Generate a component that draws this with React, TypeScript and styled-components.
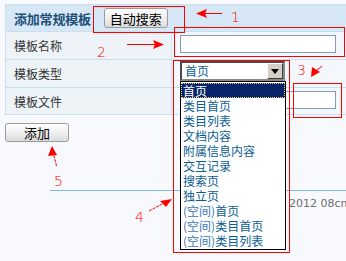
import React from "react";
import styled, { createGlobalStyle } from "styled-components";

const Global = createGlobalStyle`
  html, body { margin: 0; padding: 0; background: #f8f9fd; }
  body { font-family: "Noto Sans CJK SC", "Liberation Sans", sans-serif; font-size: 12px; }
`;

const Page = styled.div`
  position: relative;
  width: 346px;
  height: 261px;
  overflow: hidden;
  box-sizing: border-box;
  padding: 4px 0 0 5px;
`;

const FormTable = styled.div`
  width: 400px;
  border: 1px solid #c8dff0;
  background: #eef3f8;
`;

const HeaderRow = styled.div`
  height: 26px;
  display: flex;
  align-items: center;
  gap: 13px;
  padding-left: 8px;
  background: #d6e7f6;
  border-bottom: 1px solid #c8dff0;
`;

const HeaderTitle = styled.span`
  font-size: 13px;
  font-weight: 700;
  letter-spacing: -0.2px;
  color: #1d4f78;
  line-height: 1;
`;

const GreyButton = styled.button<{ $w: number; $h: number }>`
  width: ${(p) => p.$w}px;
  height: ${(p) => p.$h}px;
  padding: 0;
  border: 1px solid #9b9b9b;
  border-radius: 3px;
  background: linear-gradient(#fefefe, #ececec 60%, #dcdcdc);
  font-family: "Noto Sans CJK SC", sans-serif;
  font-size: 13px;
  line-height: 1;
  color: #000;
`;

const Row = styled.div`
  display: grid;
  grid-template-columns: 166px 1fr;
  height: 27px;
  border-bottom: 1px solid #c8dff0;
  &:last-child { border-bottom: none; height: 26px; }
`;

const LabelCell = styled.div`
  display: flex;
  align-items: center;
  padding-left: 8px;
  color: #333;
  font-size: 12px;
  border-right: 1px solid #d2e4f2;
`;

const ValueCell = styled.div<{ $top: number }>`
  padding: ${(p) => p.$top}px 0 0 8px;
  background: #f4f7fb;
`;

const TextInput = styled.div`
  width: 156px;
  height: 18px;
  box-sizing: border-box;
  border: 1px solid #7f9db9;
  background: #fff;
`;

const SelectWrap = styled.div`
  position: relative;
  width: 105px;
`;

const SelectBox = styled.div`
  height: 20px;
  box-sizing: border-box;
  display: flex;
  align-items: center;
  border: 2px solid;
  border-color: #4a4a4a #8a8a8a #8a8a8a #4a4a4a;
  background: #fff;
`;

const SelectValue = styled.span`
  flex: 1;
  padding-left: 3px;
  color: #0c5d91;
  font-size: 12px;
  line-height: 1;
`;

const ArrowBtn = styled.span`
  width: 16px;
  height: 16px;
  box-sizing: border-box;
  background: #d4d0c8;
  border: 1px solid;
  border-color: #fff #404040 #404040 #fff;
  display: flex;
  align-items: center;
  justify-content: center;
`;

const DropList = styled.ul`
  position: absolute;
  top: 100%;
  left: 0;
  width: 106px;
  margin: 0;
  padding: 1px 0;
  list-style: none;
  box-sizing: border-box;
  border: 1px solid #000;
  background: #fff;
  z-index: 2;
`;

const DropItem = styled.li<{ $active?: boolean }>`
  height: 15px;
  line-height: 15px;
  padding-left: 2px;
  font-size: 12px;
  white-space: nowrap;
  box-sizing: border-box;
  color: ${(p) => (p.$active ? "#fff" : "#0c5d91")};
  background: ${(p) => (p.$active ? "#0a246a" : "transparent")};
  outline: ${(p) => (p.$active ? "1px dotted #e8d27a" : "none")};
  outline-offset: -1px;
`;

const Paren = styled.span`
  color: #3a78b8;
`;

const ButtonRow = styled.div`
  margin-top: 8px;
`;

const Divider = styled.div`
  margin: 48px 0 0 45px;
  height: 1px;
  background: #7fb9dd;
`;

const DateText = styled.div`
  margin: 6px 0 0 284px;
  font-family: "DejaVu Sans", Verdana, sans-serif;
  font-size: 11px;
  color: #707070;
  white-space: nowrap;
`;

const Overlay = styled.svg`
  position: absolute;
  left: 0;
  top: 0;
  pointer-events: none;
  z-index: 5;
`;

const options = [
  "首页",
  "类目首页",
  "类目列表",
  "文档内容",
  "附属信息内容",
  "交互记录",
  "搜索页",
  "独立页",
  "(空间)首页",
  "(空间)类目首页",
  "(空间)类目列表",
];

function renderOption(o: string) {
  if (o.startsWith("(空间)")) {
    return (
      <>
        <Paren>(空间)</Paren>
        {o.slice(4)}
      </>
    );
  }
  return o;
}

const red = "#ff0000";

function Annotations() {
  const num = { fill: red, fontSize: 14, fontFamily: "DejaVu Sans, sans-serif", fontWeight: 200 } as const;
  return (
    <Overlay width={346} height={261} viewBox="0 0 346 261">
      <g fill="none" stroke={red} strokeWidth={1}>
        <rect x={93.5} y={6.5} width={91} height={26} />
        <rect x={174.5} y={27.5} width={170} height={29} />
        <rect x={173.5} y={60.5} width={116} height={192} />
        <rect x={293.5} y={83.5} width={48} height={34} />
        <line x1={222} y1={13.5} x2={204} y2={13.5} />
        <line x1={127} y1={44.5} x2={155} y2={44.5} />
        <line x1={149} y1={211} x2={164} y2={203} strokeDasharray="3 1" />
        <line x1={56.5} y1={166} x2={53.5} y2={154} strokeDasharray="3 1" />
        <line x1={316} y1={71} x2={322} y2={66} />
      </g>
      <g fill={red}>
        <polygon points="196,13.5 207,9 205,13.5 207,18" />
        <polygon points="164,44.5 153,40 155,44.5 153,49" />
        <polygon points="172,199 160,201 166,207" />
        <polygon points="52,146 48,156 57,155" />
        <polygon points="311,77 312,67 320,72" />
      </g>
      <text x={231} y={22} {...num}>1</text>
      <text x={97} y={57} {...num}>2</text>
      <text x={297} y={75} {...num}>3</text>
      <text x={135} y={222} {...num}>4</text>
      <text x={54} y={186} {...num}>5</text>
    </Overlay>
  );
}

export default function App() {
  return (
    <>
      <Global />
      <Page>
        <FormTable>
          <HeaderRow>
            <HeaderTitle>添加常规模板</HeaderTitle>
            <GreyButton $w={64} $h={20}>自动搜索</GreyButton>
          </HeaderRow>
          <Row>
            <LabelCell>模板名称</LabelCell>
            <ValueCell $top={3}>
              <TextInput />
            </ValueCell>
          </Row>
          <Row>
            <LabelCell>模板类型</LabelCell>
            <ValueCell $top={1}>
              <SelectWrap>
                <SelectBox>
                  <SelectValue>首页</SelectValue>
                  <ArrowBtn>
                    <svg width="8" height="5" viewBox="0 0 8 5">
                      <polygon points="0,0 8,0 4,5" fill="#000" />
                    </svg>
                  </ArrowBtn>
                </SelectBox>
                <DropList>
                  {options.map((o, i) => (
                    <DropItem key={o} $active={i === 0}>
                      {renderOption(o)}
                    </DropItem>
                  ))}
                </DropList>
              </SelectWrap>
            </ValueCell>
          </Row>
          <Row>
            <LabelCell>模板文件</LabelCell>
            <ValueCell $top={3}>
              <TextInput />
            </ValueCell>
          </Row>
        </FormTable>
        <ButtonRow>
          <GreyButton $w={64} $h={19}>添加</GreyButton>
        </ButtonRow>
        <Divider />
        <DateText>2012 08cm</DateText>
        <Annotations />
      </Page>
    </>
  );
}
